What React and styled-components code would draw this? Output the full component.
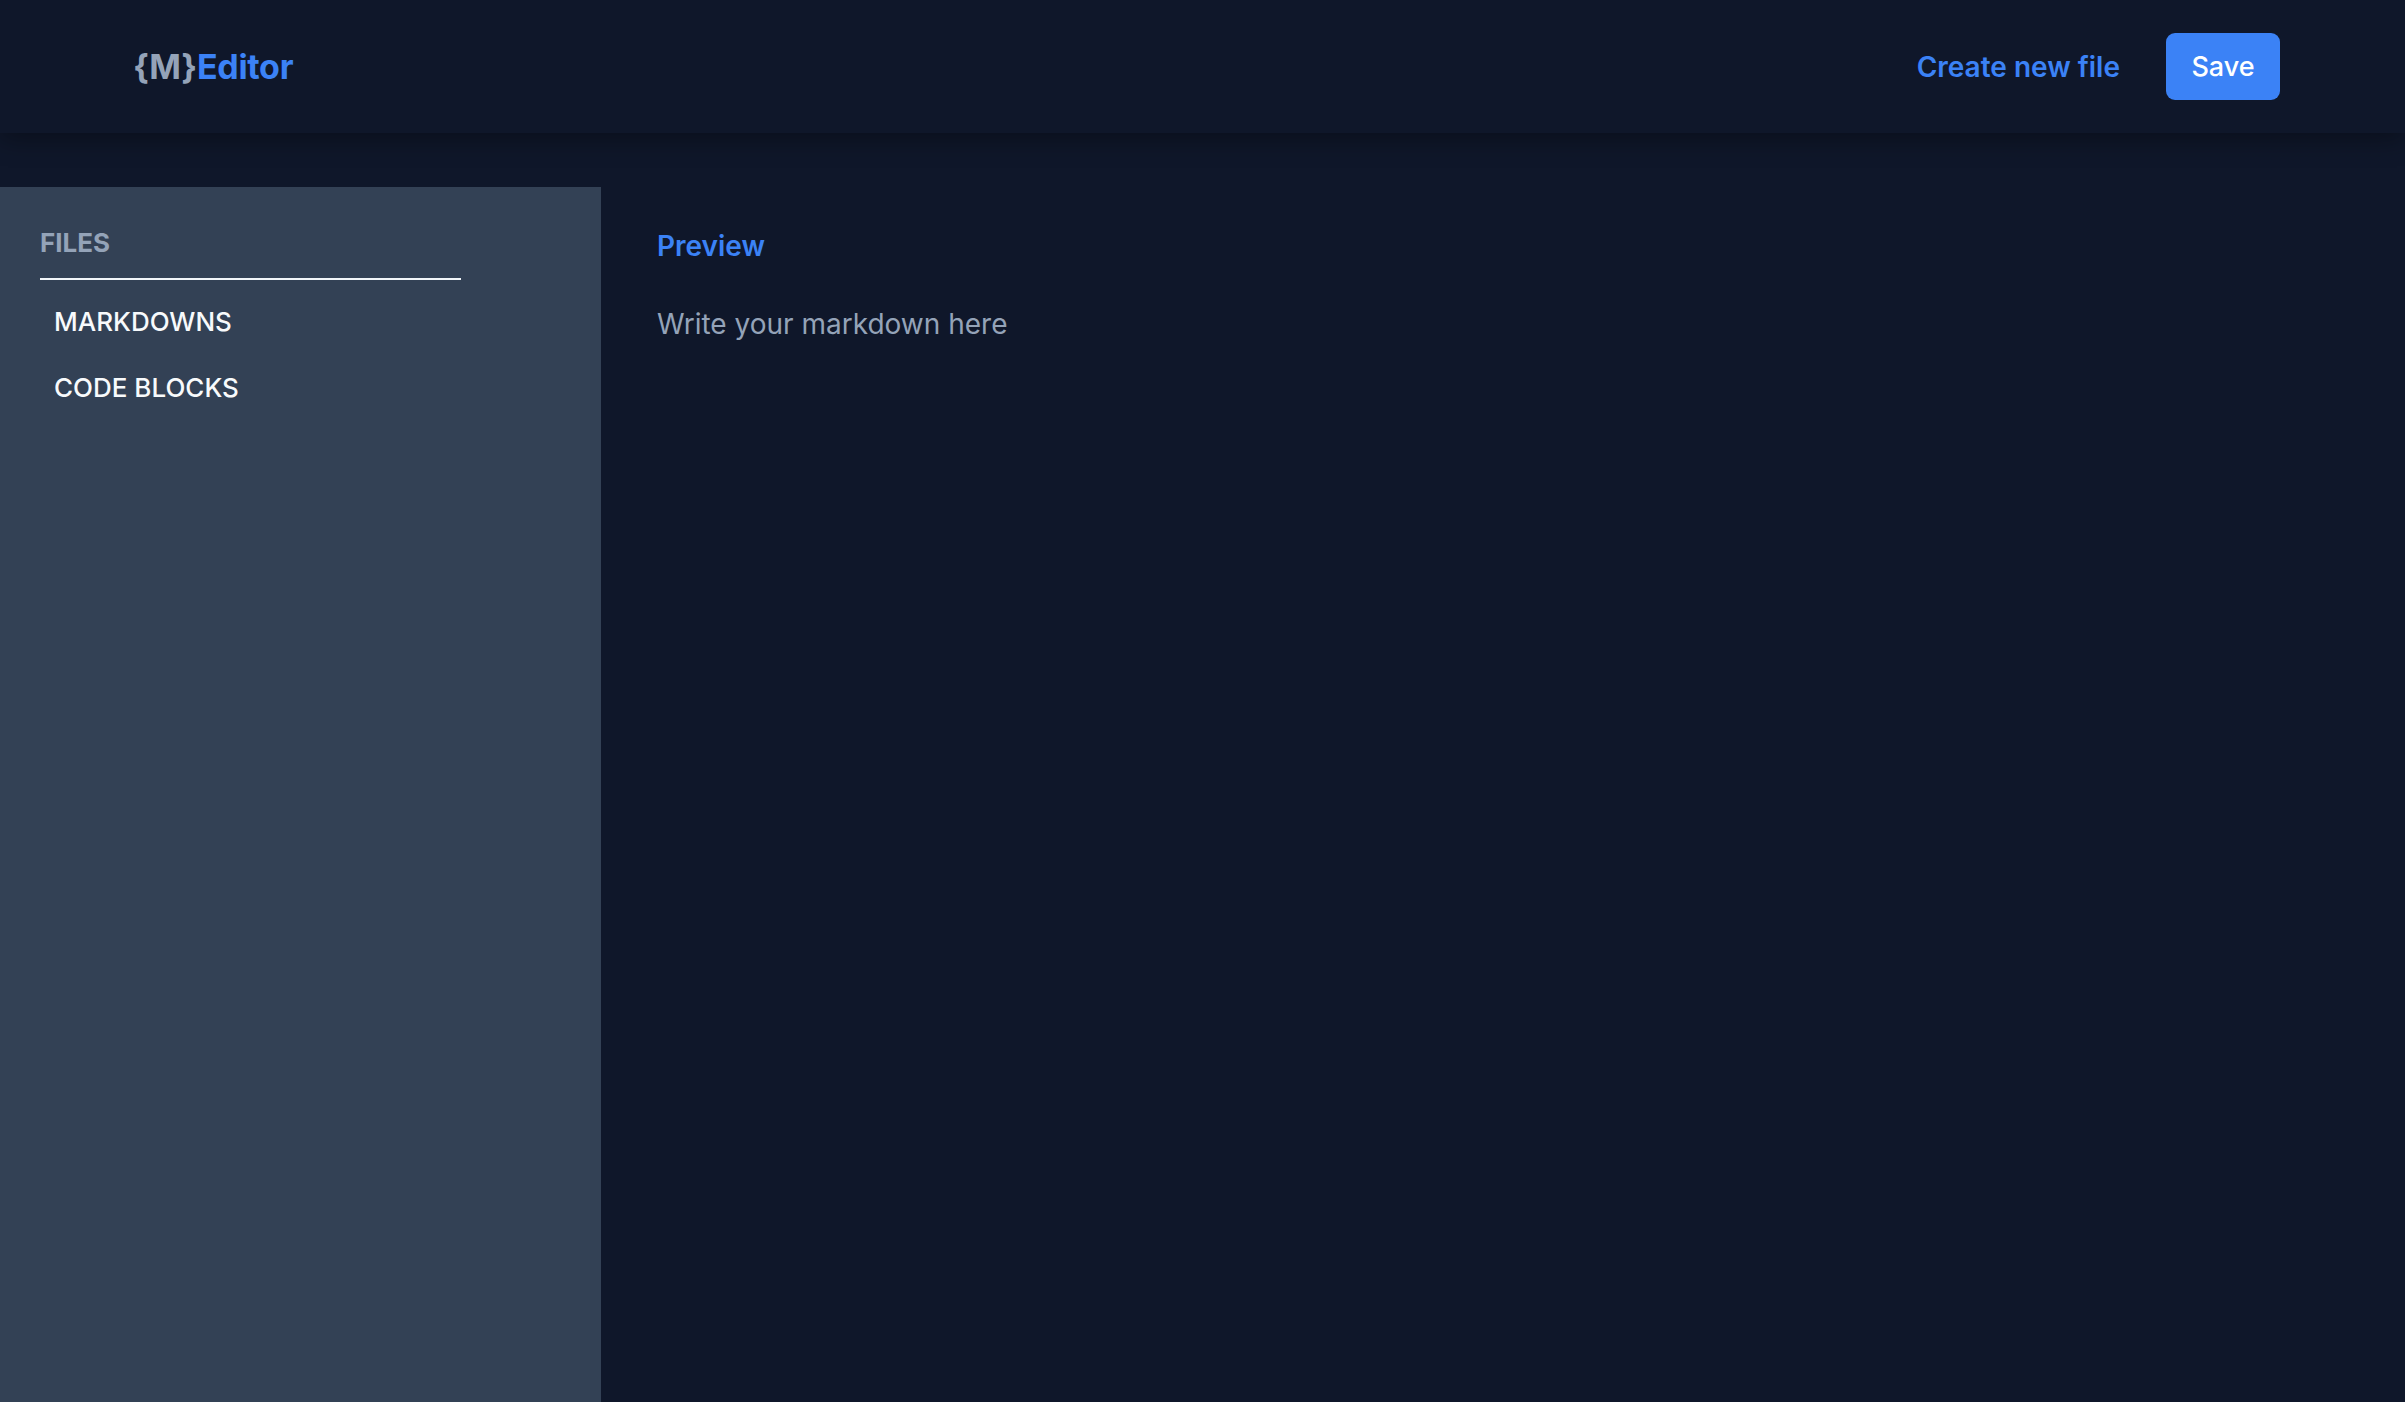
import React from "react";
import styled, { createGlobalStyle } from "styled-components";

const Global = createGlobalStyle`
  html, body { margin: 0; padding: 0; background: #0f172a; }
  body { font-family: "Inter", "Open Sans", sans-serif; }
  * { box-sizing: border-box; }
`;

const Page = styled.div`
  height: 1402px;
  display: flex;
  flex-direction: column;
  background: #0f172a;
  overflow: hidden;
`;

const Header = styled.header`
  height: 133px;
  flex-shrink: 0;
  display: flex;
  align-items: center;
  justify-content: space-between;
  padding: 0 125px 0 133px;
  box-shadow: 0 6px 24px rgba(0, 0, 0, 0.35);
  position: relative;
  z-index: 1;
`;

const Logo = styled.div`
  font-size: 34px;
  font-weight: 700;
  color: #3b82f6;
  letter-spacing: -0.3px;
`;

const Brace = styled.span`
  color: #94a3b8;
`;

const Actions = styled.div`
  display: flex;
  align-items: center;
  gap: 46px;
`;

const LinkButton = styled.button`
  background: none;
  border: none;
  color: #3b82f6;
  font: 600 28px "Inter", sans-serif;
  padding: 0;
`;

const SaveButton = styled.button`
  background: #3b82f6;
  color: #fff;
  border: none;
  border-radius: 9px;
  width: 114px;
  height: 67px;
  font: 500 27px "Inter", sans-serif;
`;

const Body = styled.div`
  flex: 1;
  display: flex;
  margin-top: 54px;
`;

const Sidebar = styled.aside`
  width: 601px;
  background: #334155;
  padding: 40px 0 0 40px;
`;

const SectionTitle = styled.div`
  width: 421px;
  color: #94a3b8;
  font-size: 26px;
  font-weight: 700;
  padding-bottom: 20px;
  border-bottom: 2px solid #f1f5f9;
`;

const NavItem = styled.div`
  color: #f8fafc;
  font-size: 26px;
  font-weight: 500;
  padding-left: 14px;
  height: 66px;
  display: flex;
  align-items: center;
`;

const NavList = styled.div`
  padding-top: 8px;
`;

const Main = styled.main`
  flex: 1;
  padding: 42px 56px;
`;

const PreviewTitle = styled.div`
  color: #3b82f6;
  font-size: 28px;
  font-weight: 600;
`;

const Placeholder = styled.div`
  margin-top: 44px;
  color: #94a3b8;
  font-size: 28px;
  font-weight: 400;
`;

export default function App() {
  return (
    <Page>
      <Global />
      <Header>
        <Logo>
          <Brace>{"{M}"}</Brace>Editor
        </Logo>
        <Actions>
          <LinkButton>Create new file</LinkButton>
          <SaveButton>Save</SaveButton>
        </Actions>
      </Header>
      <Body>
        <Sidebar>
          <SectionTitle>FILES</SectionTitle>
          <NavList>
            <NavItem>MARKDOWNS</NavItem>
            <NavItem>CODE BLOCKS</NavItem>
          </NavList>
        </Sidebar>
        <Main>
          <PreviewTitle>Preview</PreviewTitle>
          <Placeholder>Write your markdown here</Placeholder>
        </Main>
      </Body>
    </Page>
  );
}
